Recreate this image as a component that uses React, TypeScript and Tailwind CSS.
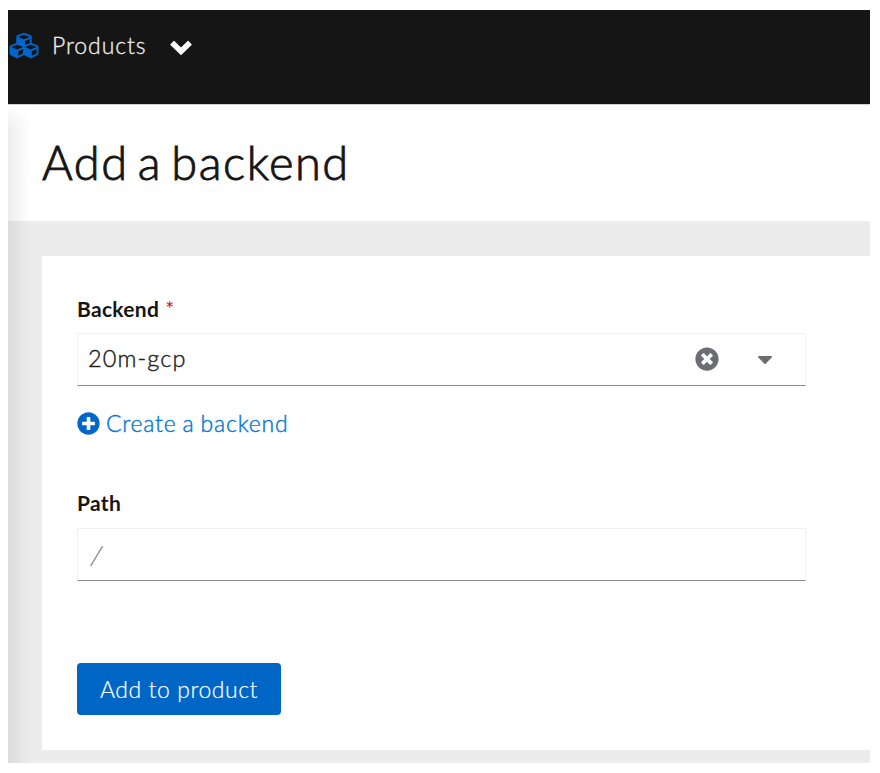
import React from "react";
import { FaCubes, FaTimesCircle, FaCaretDown, FaPlusCircle } from "react-icons/fa";

function Chevron() {
  return (
    <svg viewBox="0 0 22 15" className="ml-[22px] mt-[13px] h-[15px] w-[22px]" fill="currentColor">
      <path d="M0.4 4.2 3.6 1 Q4 0.6 4.4 1L11 7.6 17.6 1Q18 0.6 18.4 1L21.6 4.2Q22 4.6 21.6 5L11.5 14.8Q11 15.2 10.5 14.8L0.4 5Q0 4.6 0.4 4.2Z" />
    </svg>
  );
}

function Header() {
  return (
    <header className="flex h-[94px] items-start border-b border-[#151515] bg-[#151515] pt-[17px] text-white">
      <FaCubes className="mt-[4px] h-[29px] w-[32px] text-[#0066cc]" />
      <span className="ml-[12px] w-[96px] whitespace-nowrap text-[23px] leading-9 tracking-[0.9px] text-[#f0f0f0] [-webkit-text-stroke:0.3px]">
        Products
      </span>
      <Chevron />
    </header>
  );
}

function Label({ text, required = false }: { text: string; required?: boolean }) {
  return (
    <label className="flex h-[32px] text-[21px] leading-8 font-bold tracking-[0.3px] text-[#151515]">
      <span>{text}</span>
      {required && <span className="ml-[6px] font-normal text-[#e01010]">*</span>}
    </label>
  );
}

export default function App() {
  return (
    <div className="h-[773px] w-[880px] overflow-hidden bg-white px-[8px] pt-[10px] font-['Lato',sans-serif] font-light">
      <div className="w-[862px]">
        <Header />
        <main className="relative h-[659px] border-t border-[#d2d2d2] bg-[#ececec]">
          <div className="flex h-[116px] items-center bg-white pb-[3px] pl-[34px]">
            <h1 className="whitespace-nowrap text-[47px] leading-[56px] tracking-[1.5px] text-[#151515] [-webkit-text-stroke:0.9px] [word-spacing:-5px]">
              Add a backend
            </h1>
          </div>
          <section className="mt-[35px] ml-[34px] flex h-[494px] flex-col bg-white pt-[37px] pl-[35px]">
            <Label text="Backend" required />
            <div className="mt-[8px] flex h-[53px] w-[729px] items-center border border-b-[#8a8d90] border-[#f0f0f0] pb-[1px] pl-[10px]">
              <span className="flex-1 text-[23.5px] tracking-[1.1px] text-[#222222] [-webkit-text-stroke:0.4px]">20m-gcp</span>
              <FaTimesCircle className="h-[24px] w-[24px] text-[#6a6e73]" />
              <FaCaretDown className="ml-[34px] mr-[28px] h-[24px] w-[24px] text-[#6a6e73]" />
            </div>
            <div className="mt-[19px] flex h-[36px] items-center text-[23px] text-[#0077d4]">
              <FaPlusCircle className="h-[23px] w-[23px] text-[#0066cc]" />
              <span className="ml-[6px] tracking-[0.8px] [-webkit-text-stroke:0.4px] [word-spacing:-1px]">Create a backend</span>
            </div>
            <div className="mt-[46px]">
              <Label text="Path" />
            </div>
            <div className="mt-[9px] flex h-[53px] w-[729px] border border-b-[#8a8d90] border-[#f0f0f0] bg-white">
              <input
                placeholder="/"
                className="w-full origin-left scale-x-[1.5] pt-[2px] pl-[7px] text-[25px] placeholder:text-[#8a8d90]"
              />
            </div>
            <button className="mt-[82px] h-[52px] w-[204px] rounded-[4px] bg-[#0066c6] text-[23px] tracking-[0.55px] text-white [-webkit-text-stroke:0.2px]">
              Add to product
            </button>
          </section>
          <div className="absolute top-0 left-0 h-[658px] w-[22px] bg-linear-to-r from-black/7 to-transparent [mask-image:linear-gradient(to_bottom,transparent,black_24px)]" />
        </main>
      </div>
    </div>
  );
}
